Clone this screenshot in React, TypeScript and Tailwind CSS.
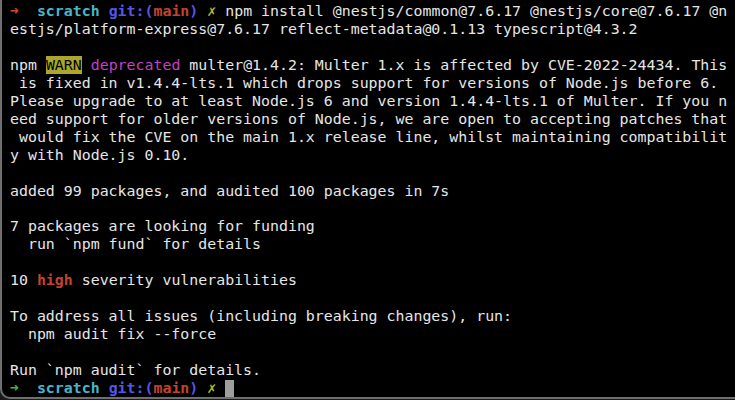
import React from "react";

const Prompt = ({ arrow }: { arrow: string }) => (
  <>
    <span className={"font-bold " + arrow}>➜</span>
    {"  "}
    <span className="font-bold text-[#4ab4c8]">scratch</span>{" "}
    <span className="font-bold text-[#5555e8]">git:(</span>
    <span className="font-bold text-[#c4432e]">main</span>
    <span className="font-bold text-[#5555e8]">)</span>{" "}
    <span className="font-bold text-[#b9b62c]">✗</span>{" "}
  </>
);

export default function App() {
  return (
    <div className="w-[735px] h-[400px] bg-[#1a1a1a] overflow-hidden">
      <div
        className="h-[399px] bg-black border-l-2 border-b-2 border-[#6f6f6f] rounded-bl-[10px] pl-[8px] pt-[3px] text-[#e6e6e6] text-[14.9px] leading-[17.95px] whitespace-pre overflow-hidden"
        style={{ fontFamily: '"DejaVu Sans Mono", "Liberation Mono", monospace' }}
      >
        <div>
          <Prompt arrow="text-[#cf462d]" />
          npm install @nestjs/common@7.6.17 @nestjs/core@7.6.17 @n
        </div>
        <div>estjs/platform-express@7.6.17 reflect-metadata@0.1.13 typescript@4.3.2</div>
        <div>{" "}</div>
        <div>
          npm <span className="bg-[#aaa72c] text-black">WARN</span>{" "}
          <span className="text-[#c63fc6]">deprecated</span> multer@1.4.2: Multer 1.x is affected by CVE-2022-24434. This
        </div>
        <div>{" is fixed in v1.4.4-lts.1 which drops support for versions of Node.js before 6."}</div>
        <div>Please upgrade to at least Node.js 6 and version 1.4.4-lts.1 of Multer. If you n</div>
        <div>eed support for older versions of Node.js, we are open to accepting patches that</div>
        <div>{" would fix the CVE on the main 1.x release line, whilst maintaining compatibilit"}</div>
        <div>y with Node.js 0.10.</div>
        <div>{" "}</div>
        <div>added 99 packages, and audited 100 packages in 7s</div>
        <div>{" "}</div>
        <div>7 packages are looking for funding</div>
        <div>{"  run `npm fund` for details"}</div>
        <div>{" "}</div>
        <div>
          10 <span className="font-bold text-[#c4432e]">high</span> severity vulnerabilities
        </div>
        <div>{" "}</div>
        <div>To address all issues (including breaking changes), run:</div>
        <div>{"  npm audit fix --force"}</div>
        <div>{" "}</div>
        <div>Run `npm audit` for details.</div>
        <div className="flex items-center">
          <span>
            <Prompt arrow="text-[#3cb64b]" />
          </span>
          <span className="inline-block w-[9px] h-[17px] bg-[#9e9e9e]" />
        </div>
      </div>
    </div>
  );
}
